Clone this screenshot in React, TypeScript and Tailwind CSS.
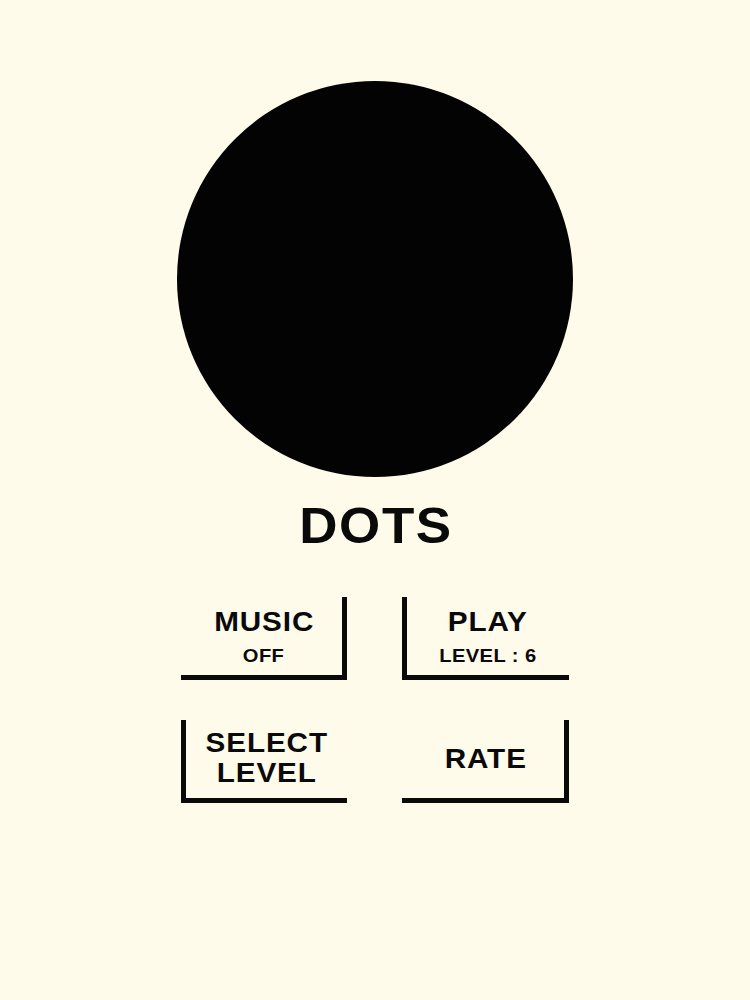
export default function App() {
  const font = { fontFamily: '"Liberation Sans", Arial, sans-serif' };
  return (
    <div
      className="w-[750px] h-[1000px] bg-[#fffbea] flex flex-col items-center pt-[81px] text-[#0a0a0a]"
      style={font}
    >
      <div className="w-[396px] h-[396px] rounded-full bg-[#030303]" />
      <div className="mt-[24px] text-[50px] leading-[50px] font-bold tracking-[0.03em] pl-[0.03em] scale-x-[1.06]">DOTS</div>
      <div className="mt-[46px] grid grid-cols-[166px_167px] gap-x-[55px] gap-y-[40px]">
        <div className="h-[83px] border-r-[5px] border-b-[5px] border-[#0a0a0a] flex flex-col items-center pt-[11px] pl-[5px]">
          <div className="text-[28px] leading-[28px] font-bold tracking-[0.03em] scale-x-[1.06]">MUSIC</div>
          <div className="mt-[10px] text-[19px] leading-[19px] font-bold tracking-[0.02em] scale-x-[1.06]">OFF</div>
        </div>
        <div className="h-[83px] border-l-[5px] border-b-[5px] border-[#0a0a0a] flex flex-col items-center pt-[11px]">
          <div className="text-[28px] leading-[28px] font-bold tracking-[0.03em] scale-x-[1.06]">PLAY</div>
          <div className="mt-[10px] text-[19px] leading-[19px] font-bold tracking-[0.02em] scale-x-[1.06]">LEVEL : 6</div>
        </div>
        <div className="h-[83px] border-l-[5px] border-b-[5px] border-[#0a0a0a] flex flex-col items-center pt-[8px]">
          <div className="text-[28px] leading-[30px] font-bold tracking-[0.03em] text-center scale-x-[1.06]">
            SELECT
            <br />
            LEVEL
          </div>
        </div>
        <div className="h-[83px] border-r-[5px] border-b-[5px] border-[#0a0a0a] flex items-center justify-center pl-[5px]">
          <div className="text-[28px] leading-[28px] font-bold tracking-[0.03em] scale-x-[1.06]">RATE</div>
        </div>
      </div>
    </div>
  );
}
